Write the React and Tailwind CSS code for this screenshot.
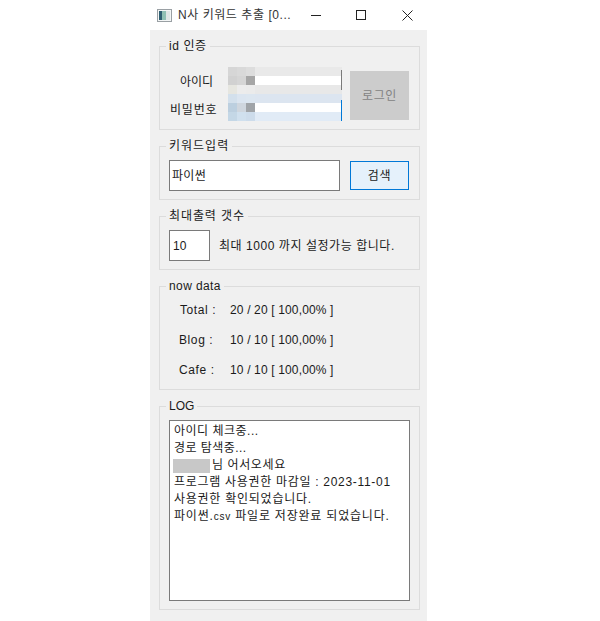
import React from "react";

const font = { fontFamily: '"Liberation Sans", "Noto Sans CJK KR", sans-serif' };

// blurred id / password area, 6 rows of 9px
const blurRows = [
  { cells: ["#d6d6d6", "#d9d9d9", "#dddddd"], rest: "bg-[#e9e9e9]" },
  { cells: ["#d1d1d1", "#d5d5d5", "#a6a6a6"], rest: "bg-white" },
  { cells: ["#e6e6e0", "#ececec", "#ebebeb"], rest: "bg-[#e8e8e8]" },
  { cells: ["#d3e0ec", "#dbe5f0", "#dce6f0"], rest: "bg-[#dce5f0]" },
  { cells: ["#bccfdf", "#cfd6de", "#a0a4a8"], rest: "bg-white" },
  { cells: ["#c4d7e6", "#d0e0ee", "#cddceb"], rest: "bg-[#e1ebf6]" },
];

const stats = [
  { label: "Total :", value: "20 / 20 [ 100,00% ]", pad: "pl-[11px] w-[61px]" },
  { label: "Blog :", value: "10 / 10 [ 100,00% ]", pad: "pl-[10px] w-[61px]" },
  { label: "Cafe :", value: "10 / 10 [ 100,00% ]", pad: "pl-[10px] w-[61px]" },
];

const Group = ({ title, track, className, children }) => (
  <div className={`relative border border-[#dcdcdc] ${className}`}>
    <span className={`absolute -top-[9px] left-[6px] bg-[#f0f0f0] px-[3px] text-xs leading-[16px] text-[#1a1a1a] ${track}`}>
      {title}
    </span>
    {children}
  </div>
);

export default function App() {
  return (
    <div className="min-h-[621px] bg-white pl-[150px]" style={font}>
      <div className="flex h-[621px] w-[277px] flex-col">
        {/* title bar */}
        <div className="flex h-[30px] items-center bg-white text-xs text-[#333333]">
          <svg width="15" height="13" viewBox="0 0 15 13" className="ml-[7px]">
            <rect x="0.5" y="0.5" width="14" height="12" fill="#f4f6f6" stroke="#9aa0a4" />
            <rect x="2" y="2" width="3" height="9" fill="#2f5f72" />
            <rect x="5" y="2" width="4" height="9" fill="#8fc0b4" />
            <rect x="9" y="2" width="4" height="9" fill="#dfe6e6" />
          </svg>
          <span className="ml-[6px] w-[127px] tracking-[0.55px]">N사 키워드 추출 [0...</span>
          <svg width="10" height="10" viewBox="0 0 10 10" className="ml-[6px]">
            <path d="M0 5.5H10" stroke="#222222" />
          </svg>
          <svg width="10" height="10" viewBox="0 0 10 10" className="ml-[35px]">
            <rect x="0.5" y="0.5" width="9" height="9" fill="none" stroke="#222222" />
          </svg>
          <svg width="11" height="11" viewBox="0 0 11 11" className="ml-[36px]">
            <path d="M0.5 0.5L10.5 10.5M10.5 0.5L0.5 10.5" stroke="#222222" />
          </svg>
        </div>

        {/* body */}
        <div className="flex flex-1 flex-col gap-4 bg-[#f0f0f0] pl-[9px] pt-4 text-xs text-[#1a1a1a]">
          <Group title="id 인증" track="tracking-[0.6px]" className="h-[84px] w-[261px]">
            <div className="flex items-start pl-[10px] pt-[20px]">
              <div className="flex w-[58px] flex-col pt-[7px] leading-[16px]">
                <span className="pl-[10px]">아이디</span>
                <span className="mt-[12px] tracking-[0.8px]">비밀번호</span>
              </div>
              <div className="relative w-[114px]">
                {blurRows.map((row, i) => (
                  <div key={i} className="flex h-[9px]">
                    {row.cells.map((c, j) => (
                      <div key={j} className="h-full w-[9px]" style={{ background: c }} />
                    ))}
                    <div className={`flex-1 ${row.rest}`} />
                  </div>
                ))}
                <div className="absolute right-0 top-[3px] h-[20px] w-px bg-[#7a7a7a]" />
                <div className="absolute right-0 top-[33px] h-[21px] w-px bg-[#0078d7]" />
              </div>
              <div className="ml-[8px] mt-[4px] flex h-[49px] w-[59px] items-center justify-center bg-[#cccccc] tracking-[0.6px] text-[#838383]">
                로그인
              </div>
            </div>
          </Group>

          <Group title="키워드입력" track="tracking-[1px]" className="h-[54px] w-[261px]">
            <div className="flex items-center gap-[10px] pl-[9px] pt-[13px]">
              <div className="flex h-[31px] w-[171px] items-center border border-[#7a7a7a] bg-white pl-[2px] tracking-[0.3px]">
                파이썬
              </div>
              <div className="flex h-[29px] w-[59px] items-center justify-center border border-[#0078d7] bg-[#e5f1fb] tracking-[0.6px]">
                검색
              </div>
            </div>
          </Group>

          <Group title="최대출력 갯수" track="tracking-[0.9px]" className="h-[54px] w-[261px]">
            <div className="flex items-center gap-[9px] pl-[9px] pt-[13px]">
              <div className="flex h-[31px] w-[41px] items-center border border-[#7a7a7a] bg-white pl-[3px]">
                10
              </div>
              <span className="tracking-[0.55px]">최대 1000 까지 설정가능 합니다.</span>
            </div>
          </Group>

          <Group title="now data" track="tracking-[0.4px]" className="h-[104px] w-[261px]">
            <div className="flex flex-col gap-[14px] pt-[15px]">
              {stats.map((s) => (
                <div key={s.label} className="flex h-[16px] items-center leading-[16px]">
                  <span className={`ml-[9px] tracking-[0.6px] ${s.pad}`}>{s.label}</span>
                  <span className="tracking-[0.15px]">{s.value}</span>
                </div>
              ))}
            </div>
          </Group>

          <Group title="LOG" className="h-[204px] w-[261px]">
            <div className="ml-[9px] mt-[13px] h-[181px] w-[241px] border border-[#7a7a7a] bg-white pl-[4px] pt-[2px] leading-[17px] tracking-[0.6px]">
              <div className="tracking-[0.5px]">아이디 체크중...</div>
              <div className="tracking-[0.45px]">경로 탐색중...</div>
              <div className="flex items-center">
                <div className="mr-px h-[14px] w-[37px] -translate-x-px bg-[#c8c8c8]" />
                <span>님 어서오세요</span>
              </div>
              <div className="tracking-[0.7px]">프로그램 사용권한 마감일 : 2023-11-01</div>
              <div className="tracking-[0.75px]">사용권한 확인되었습니다.</div>
              <div className="tracking-[0.8px]">
                파이썬.<span className="text-[10px]">csv</span> 파일로 저장완료 되었습니다.
              </div>
            </div>
          </Group>
        </div>
      </div>
    </div>
  );
}
